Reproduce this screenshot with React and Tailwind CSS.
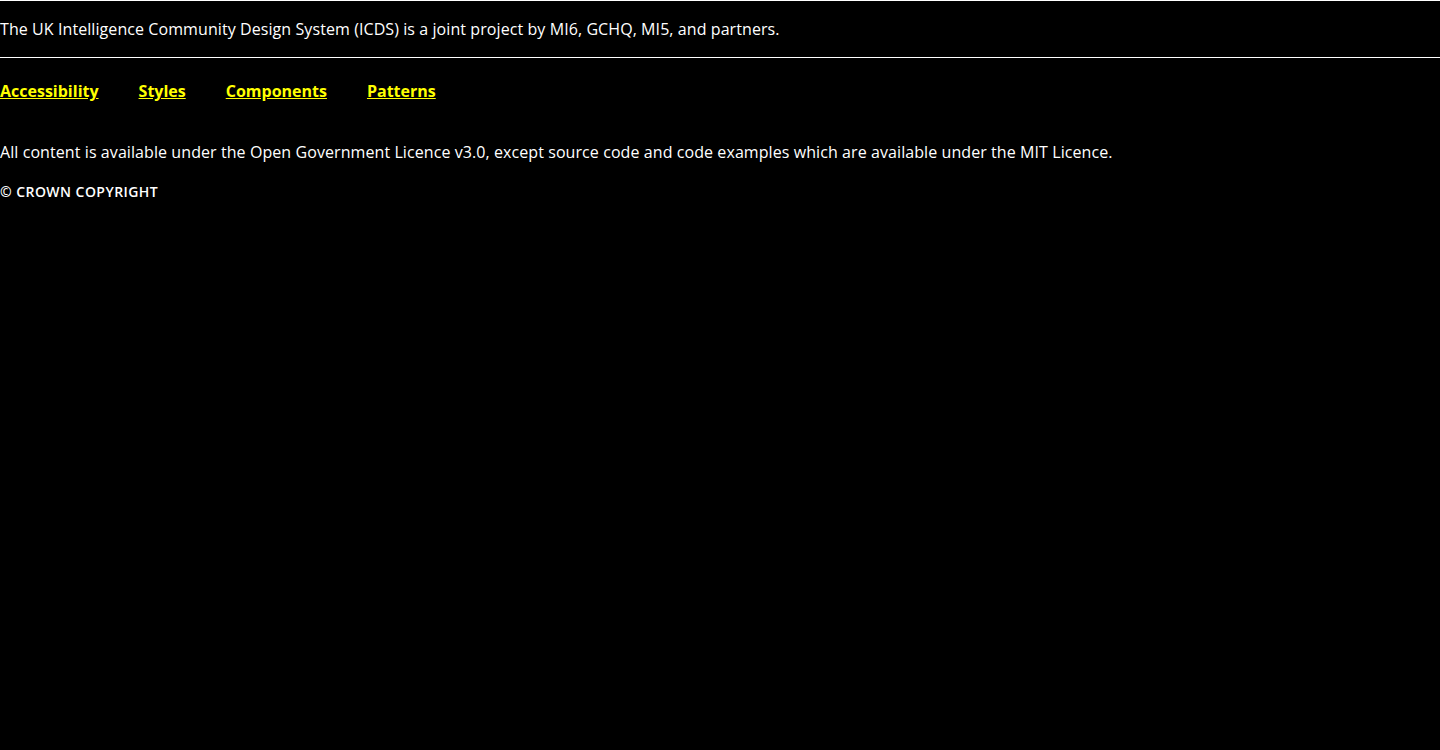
export default function App() {
  return (
    <div className="min-h-[750px] bg-black text-white" style={{ fontFamily: '"Open Sans", sans-serif' }}>
      <div className="border-t border-white py-4">
        <p className="text-base leading-6 tracking-[0.08px]">
          The UK Intelligence Community Design System (ICDS) is a joint project by MI6, GCHQ, MI5, and partners.
        </p>
      </div>
      <div className="border-t border-white pt-[21px]">
        <ul className="flex gap-10 text-base leading-6 font-bold">
          <li><a href="#" className="text-[#ffff00] underline">Accessibility</a></li>
          <li><a href="#" className="text-[#ffff00] underline">Styles</a></li>
          <li><a href="#" className="text-[#ffff00] underline">Components</a></li>
          <li><a href="#" className="text-[#ffff00] underline">Patterns</a></li>
        </ul>
        <p className="mt-[37px] text-base leading-6 tracking-[0.08px]">
          All content is available under the Open Government Licence v3.0, except source code and code examples which are available under the MIT Licence.
        </p>
        <p className="mt-[18px] text-sm leading-5 font-semibold uppercase tracking-[0.45px]">© Crown Copyright</p>
      </div>
    </div>
  );
}
